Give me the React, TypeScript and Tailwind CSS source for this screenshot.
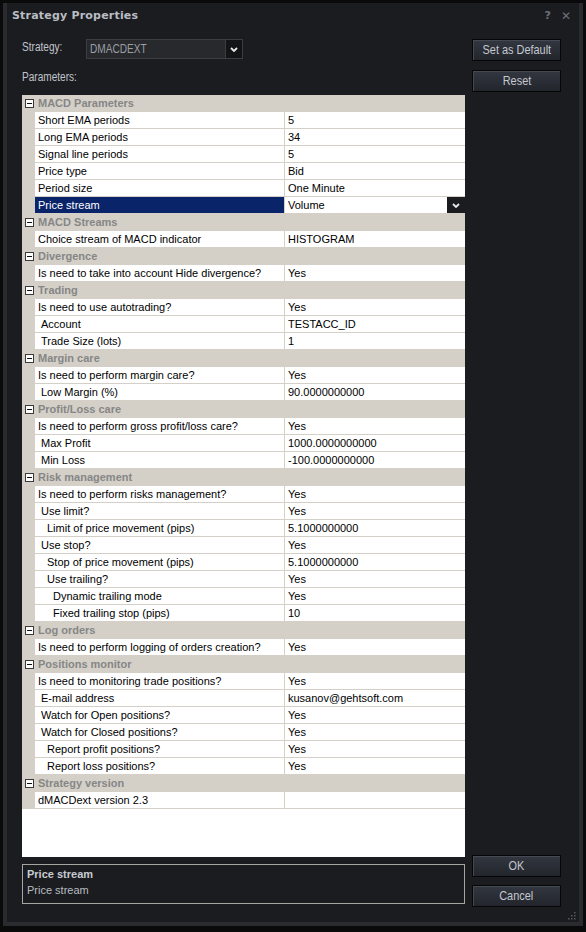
import React from "react";

type Row = { c?: boolean; n: string; v?: string; l?: number; sel?: boolean; dd?: boolean };

const rows: Row[] = [
  { c: true, n: "MACD Parameters" },
  { n: "Short EMA periods", v: "5", l: 0 },
  { n: "Long EMA periods", v: "34", l: 0 },
  { n: "Signal line periods", v: "5", l: 0 },
  { n: "Price type", v: "Bid", l: 0 },
  { n: "Period size", v: "One Minute", l: 0 },
  { n: "Price stream", v: "Volume", l: 0, sel: true, dd: true },
  { c: true, n: "MACD Streams" },
  { n: "Choice stream of MACD indicator", v: "HISTOGRAM", l: 0 },
  { c: true, n: "Divergence" },
  { n: "Is need to take into account Hide divergence?", v: "Yes", l: 0 },
  { c: true, n: "Trading" },
  { n: "Is need to use autotrading?", v: "Yes", l: 0 },
  { n: "Account", v: "TESTACC_ID", l: 1 },
  { n: "Trade Size (lots)", v: "1", l: 1 },
  { c: true, n: "Margin care" },
  { n: "Is need to perform margin care?", v: "Yes", l: 0 },
  { n: "Low Margin (%)", v: "90.0000000000", l: 1 },
  { c: true, n: "Profit/Loss care" },
  { n: "Is need to perform gross profit/loss care?", v: "Yes", l: 0 },
  { n: "Max Profit", v: "1000.0000000000", l: 1 },
  { n: "Min Loss", v: "-100.0000000000", l: 1 },
  { c: true, n: "Risk management" },
  { n: "Is need to perform risks management?", v: "Yes", l: 0 },
  { n: "Use limit?", v: "Yes", l: 1 },
  { n: "Limit of price movement (pips)", v: "5.1000000000", l: 2 },
  { n: "Use stop?", v: "Yes", l: 1 },
  { n: "Stop of price movement (pips)", v: "5.1000000000", l: 2 },
  { n: "Use trailing?", v: "Yes", l: 2 },
  { n: "Dynamic trailing mode", v: "Yes", l: 3 },
  { n: "Fixed trailing stop (pips)", v: "10", l: 3 },
  { c: true, n: "Log orders" },
  { n: "Is need to perform logging of orders creation?", v: "Yes", l: 0 },
  { c: true, n: "Positions monitor" },
  { n: "Is need to monitoring trade positions?", v: "Yes", l: 0 },
  { n: "E-mail address", v: "kusanov@gehtsoft.com", l: 1 },
  { n: "Watch for Open positions?", v: "Yes", l: 1 },
  { n: "Watch for Closed positions?", v: "Yes", l: 1 },
  { n: "Report profit positions?", v: "Yes", l: 2 },
  { n: "Report loss positions?", v: "Yes", l: 2 },
  { c: true, n: "Strategy version" },
  { n: "dMACDext version 2.3", v: "", l: 0 },
];

const indent = ["pl-[3px]", "pl-[6px]", "pl-[12px]", "pl-[18px]"];

const Chevron = () => (
  <svg width="8" height="5" viewBox="0 0 8 5">
    <path d="M1 1 L4 4 L7 1" fill="none" stroke="#e8e8e8" strokeWidth="1.8" />
  </svg>
);

const Minus = () => (
  <svg width="9" height="9" viewBox="0 0 9 9">
    <rect x="0.5" y="0.5" width="8" height="8" fill="#ffffff" stroke="#3a3a3a" />
    <path d="M2 4.5 H7" stroke="#111" strokeWidth="1" />
  </svg>
);

const sans = { fontFamily: '"Liberation Sans", Arial, sans-serif' };

function Narrow({ children, className = "" }: { children: React.ReactNode; className?: string }) {
  return (
    <span className={`inline-block scale-x-[0.84] whitespace-nowrap ${className}`} style={sans}>
      {children}
    </span>
  );
}

function Btn({ children }: { children: React.ReactNode }) {
  return (
    <div className="h-[22px] w-full flex items-center justify-center bg-gradient-to-b from-[#333741] to-[#22252b] border border-[#060607] shadow-[inset_1px_1px_0_#454952] text-[#c4c8d0] text-[13px]">
      <Narrow>{children}</Narrow>
    </div>
  );
}

export default function App() {
  return (
    <div className="w-[586px] h-[932px] bg-[#0a0a0b] pt-[3px] px-[3px] pb-[6px] flex">
      <div className="relative flex-1 flex flex-col bg-[#1b1c1f] border-l-[4px] border-r-[4px] border-b-[4px] border-[#2a2b2f]">
        {/* Title bar */}
        <div className="h-[24px] flex items-center pl-[5px] pr-[8px] pt-[2px]">
          <span
            className="text-[11px] font-bold text-[#b9bdc4] tracking-[0.2px]"
            style={{ fontFamily: '"DejaVu Sans", Verdana, sans-serif' }}
          >
            Strategy Properties
          </span>
          <div
            className="ml-auto flex items-center gap-[10px] text-[#6e7076] text-[11px] font-bold"
            style={{ fontFamily: '"DejaVu Sans", sans-serif' }}
          >
            <span>?</span>
            <span className="text-[12px]">✕</span>
          </div>
        </div>

        {/* Main */}
        <div className="flex-1 flex pl-[15px] pr-[18px] pt-[12px]">
          {/* Left column */}
          <div className="w-[443px] flex flex-col pb-[18px]">
            <div className="h-[20px] flex items-center">
              <div className="w-[64px] text-[12px] text-[#c0c4cc] -mt-[4px]">
                <Narrow className="origin-left">Strategy:</Narrow>
              </div>
              <div className="w-[157px] h-[20px] flex items-stretch bg-[#27292d] border border-[#3b3d42]">
                <div className="flex-1 flex items-center pl-[3px] text-[12px] text-[#9a9ea6]">
                  <Narrow className="origin-left">DMACDEXT</Narrow>
                </div>
                <div className="w-[17px] flex items-center justify-center bg-[#131416] border-l border-[#3b3d42]">
                  <Chevron />
                </div>
              </div>
            </div>
            <div className="h-[36px] flex items-center text-[12px] text-[#c0c4cc]">
              <Narrow className="origin-left">Parameters:</Narrow>
            </div>

            {/* Grid */}
            <div className="h-[762px] bg-white flex flex-col text-[11px] text-black" style={sans}>
              {rows.map((r, i) =>
                r.c ? (
                  <div key={i} className="h-[17px] flex items-center bg-[#d4d0c8]">
                    <div className="w-[13px] flex items-center justify-center pl-[1px]">
                      <Minus />
                    </div>
                    <div className="pl-[3px] font-bold text-[#868686]">{r.n}</div>
                  </div>
                ) : (
                  <div key={i} className="h-[17px] flex">
                    <div className="w-[13px] bg-[#d4d0c8]" />
                    <div
                      className={`w-[250px] flex items-center border-r border-b border-[#d4d0c8] whitespace-nowrap ${
                        indent[r.l ?? 0]
                      } ${r.sel ? "bg-[#0a246a] text-white" : ""}`}
                    >
                      {r.n}
                    </div>
                    <div className="flex-1 flex items-center border-b border-[#d4d0c8] pl-[3px] whitespace-nowrap">
                      <span className="flex-1">{r.v}</span>
                      {r.dd && (
                        <div className="w-[18px] h-[16px] flex items-center justify-center bg-[#1b1c1f]">
                          <Chevron />
                        </div>
                      )}
                    </div>
                  </div>
                )
              )}
            </div>

            {/* Description */}
            <div
              className="mt-[7px] h-[40px] border border-[#a6a6a0] px-[4px] pt-[1px] text-[11px] text-[#c8ccd2] leading-[16px]"
              style={sans}
            >
              <div className="font-bold">Price stream</div>
              <div className="text-[#b8bcc2]">Price stream</div>
            </div>
          </div>

          {/* Right column */}
          <div className="ml-[7px] w-[89px] flex flex-col pb-[15px]">
            <div className="h-[21px] flex">
              <Btn>Set as Default</Btn>
            </div>
            <div className="h-[21px] flex mt-[10px]">
              <Btn>Reset</Btn>
            </div>
            <div className="flex-1" />
            <Btn>OK</Btn>
            <div className="mt-[8px]">
              <Btn>Cancel</Btn>
            </div>
          </div>
        </div>

        {/* Resize grip */}
        <svg className="absolute right-[3px] bottom-[2px]" width="9" height="9" viewBox="0 0 9 9">
          {[
            [7, 1],
            [7, 4],
            [4, 4],
            [7, 7],
            [4, 7],
            [1, 7],
          ].map(([x, y], k) => (
            <rect key={k} x={x} y={y} width="1.5" height="1.5" fill="#55585e" />
          ))}
        </svg>
      </div>
    </div>
  );
}
